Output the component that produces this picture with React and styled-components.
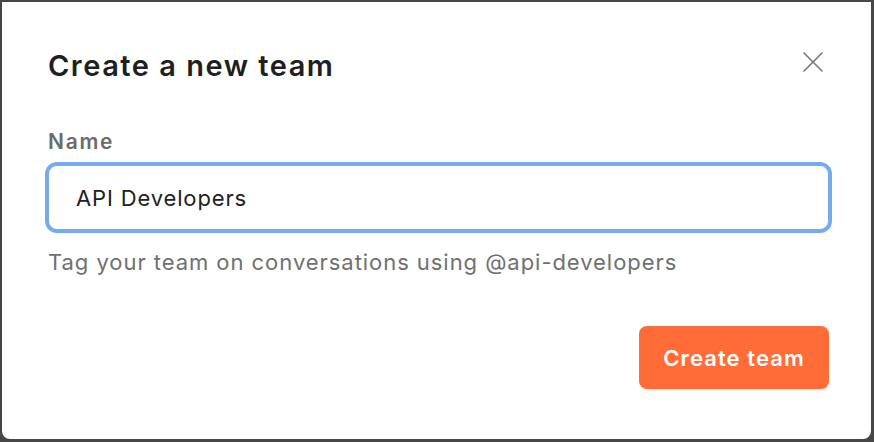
import styled, { createGlobalStyle } from "styled-components";

const GlobalStyle = createGlobalStyle`
  html, body {
    margin: 0;
    padding: 0;
    background: #474747;
    font-family: "Inter", "Noto Sans", sans-serif;
  }
  * {
    box-sizing: border-box;
  }
`;

const Frame = styled.div`
  width: 874px;
  height: 442px;
  padding: 2px 3px 3px 2px;
  display: flex;
`;

const Panel = styled.div`
  flex: 1;
  background: #ffffff;
  border-radius: 0 0 8px 8px;
  padding: 47px 42px 0 46px;
  display: flex;
  flex-direction: column;
`;

const Header = styled.div`
  display: flex;
  justify-content: space-between;
  align-items: flex-start;
`;

const Title = styled.h1`
  margin: 0;
  font-size: 29px;
  line-height: 34px;
  font-weight: 600;
  letter-spacing: 1.5px;
  color: #1f1f1f;
`;

const CloseButton = styled.button`
  width: 32px;
  height: 32px;
  margin-top: -3px;
  padding: 0;
  border: none;
  background: none;
  display: flex;
  align-items: center;
  justify-content: center;
  cursor: pointer;
  color: #777777;
`;

const Label = styled.label`
  margin-top: 47px;
  font-size: 21px;
  line-height: 24px;
  font-weight: 600;
  letter-spacing: 1.7px;
  color: #6b6b6b;
`;

const Input = styled.input`
  margin-top: 11px;
  height: 65px;
  width: 100%;
  padding: 0 27px;
  border: 1px solid #76aaf0;
  border-radius: 9px;
  box-shadow: 0 0 0 3px #76aaf0;
  outline: none;
  font-family: inherit;
  font-size: 22px;
  letter-spacing: 0.85px;
  color: #212121;
  background: #ffffff;
`;

const Hint = styled.p`
  margin: 19px 0 0;
  font-size: 22px;
  line-height: 27px;
  letter-spacing: 0.95px;
  color: #707070;
`;

const Footer = styled.div`
  margin-top: 50px;
  display: flex;
  justify-content: flex-end;
`;

const PrimaryButton = styled.button`
  height: 63px;
  padding: 0 24px;
  border: none;
  border-radius: 8px;
  background: #ff6c37;
  color: #ffffff;
  font-family: inherit;
  font-size: 22px;
  font-weight: 600;
  letter-spacing: 1.1px;
  cursor: pointer;
`;

function CloseIcon() {
  return (
    <svg width="20" height="20" viewBox="0 0 20 20" fill="none">
      <path
        d="M1 1L19 19M19 1L1 19"
        stroke="currentColor"
        strokeWidth="1.6"
        strokeLinecap="round"
      />
    </svg>
  );
}

export default function App() {
  return (
    <>
      <GlobalStyle />
      <Frame>
        <Panel>
          <Header>
            <Title>Create a new team</Title>
            <CloseButton aria-label="Close">
              <CloseIcon />
            </CloseButton>
          </Header>
          <Label htmlFor="team-name">Name</Label>
          <Input id="team-name" defaultValue="API Developers" />
          <Hint>Tag your team on conversations using @api-developers</Hint>
          <Footer>
            <PrimaryButton>Create team</PrimaryButton>
          </Footer>
        </Panel>
      </Frame>
    </>
  );
}
